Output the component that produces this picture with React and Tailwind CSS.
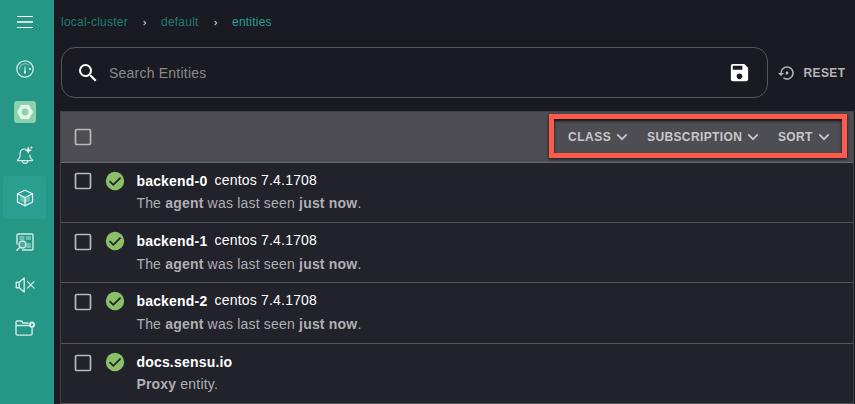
import React from "react";

const stroke = {
  fill: "none",
  stroke: "#d3ebe7",
  strokeWidth: 1.25,
  strokeLinejoin: "round",
  strokeLinecap: "round",
};

function NavItem({ children, active = false }) {
  return (
    <div
      className={
        active
          ? "flex h-[43px] w-[43px] items-center justify-center rounded-[3px] bg-[#2a9f91]"
          : "flex h-[43px] w-[43px] items-center justify-center"
      }
    >
      {children}
    </div>
  );
}

function Sidebar() {
  return (
    <nav className="flex h-full w-[54px] shrink-0 flex-col items-center bg-[#259786] pr-[5px]">
      <div className="mt-[16px] ml-px flex h-[12px] w-4 flex-col justify-between">
        <i className="block h-px bg-white" />
        <i className="block h-[2px] bg-[#c5e6e1]" />
        <i className="block h-px bg-white" />
      </div>
      <div className="mt-[19px] flex flex-col">
        <NavItem>
          <svg width="20" height="20" viewBox="0 0 20 20" {...stroke}>
            <circle cx="10" cy="10" r="8.2" />
            <path d="M4.7 10a5.3 5.3 0 0 1 9-3.8" stroke="#79c2b7" />
            <path d="M10 8v3" strokeWidth="1.4" stroke="#a8d9d1" />
            <path d="M9 11.5h2v3H9zM14.2 9h1.6v1.9h-1.6z" fill="#f0faf8" stroke="none" />
          </svg>
        </NavItem>
        <NavItem>
          <svg width="22" height="22" viewBox="0 0 22 22">
            <rect width="22" height="22" rx="3" fill="#8bd2ac" />
            <path fillRule="evenodd" fill="#e4f4ec" d="M7 4h8l4 7-4 7H7l-4-7zM11 7.6a3.4 3.4 0 1 0 0 6.8 3.4 3.4 0 0 0 0-6.8z" />
          </svg>
        </NavItem>
        <NavItem>
          <svg width="20" height="20" viewBox="0 0 20 20" {...stroke}>
            <path d="M10.2 3.8C6.8 3.6 5 6 5 9v2.7c0 1.3-2.6 2.5-2.6 3.9h15.2c0-1.4-2.6-2.6-2.6-3.9v-1.5" />
            <path d="M7.2 15.8a2.8 2.5 0 0 0 5.6 0" />
            <path d="M13.3 2.2l.8 2.2 2.2.8-2.2.8-.8 2.200-.8-2.200-2.200-.8 2.200-.8z" fill="#fff" stroke="#fff" strokeWidth=".6" />
            <path d="M16.400 1.700v1.800M15.500 2.600h1.800" strokeWidth=".8" />
          </svg>
        </NavItem>
        <NavItem active>
          <svg width="20" height="20" viewBox="0 0 20 20" {...stroke} stroke="#eef8f6">
            <path d="M5 7.600l5 2.300 5-2.300v5.200l-5 2.500-5-2.500z" fill="#68bfb3" stroke="none" />
            <path d="M10 2.200l7.500 3.600v8.300L10 17.800l-7.500-3.700V5.800z" />
            <path d="M2.500 5.800L10 9.500l7.500-3.700M10 9.500v8.300" />
          </svg>
        </NavItem>
        <NavItem>
          <svg className="mt-[2px]" width="20" height="20" viewBox="0 0 20 20" {...stroke}>
            <path d="M4.500 4h5v4h-5zM11 4h5v4h-5zM11.500 11h4.500v5h-4.500z" fill="#70bdb2" stroke="none" />
            <path d="M2 12V3.200c0-.8.400-1.200 1.200-1.200h13.600c.8 0 1.200.4 1.200 1.200v13.600c0 .8-.4 1.200-1.200 1.200H7.500" strokeWidth="1.400" />
            <circle cx="7.500" cy="12.500" r="3.500" fill="#4dab9e" strokeWidth="1.400" />
            <path d="M5 15.200L2 18.200" strokeWidth="1.600" />
          </svg>
        </NavItem>
        <NavItem>
          <svg className="mt-[2px]" width="20" height="20" viewBox="0 0 20 20" {...stroke}>
            <path d="M1.200 7.300h3v5.400h-3zM4.200 7.300L9.200 3v14l-5-4.300" strokeWidth="1.400" />
            <path d="M12.500 6.600l6.500 6.500M19 6.600l-6.500 6.500" />
          </svg>
        </NavItem>
        <NavItem>
          <svg className="mt-[2px]" width="20" height="20" viewBox="0 0 20 20" {...stroke} strokeWidth="1.400">
            <path d="M13 5H8L6.700 3H2.200C1.400 3 1 3.400 1 4.200v11.600c0 .8.600 1.300 1.400 1.300h13.200c.9 0 1.500-.5 1.500-1.300v-5.300M1 7.500h12.500" />
            <circle cx="17" cy="6.700" r="2" strokeWidth="1.500" stroke="#f4fbfa" />
            <circle cx="17" cy="6.700" r="2.900" strokeWidth=".7" strokeDasharray="1.100 1.180" stroke="#f4fbfa" />
          </svg>
        </NavItem>
      </div>
    </nav>
  );
}

function Separator() {
  return (
    <svg className="mt-px shrink-0" width="4" height="6" viewBox="0 0 4 6" fill="none" stroke="#b5b5b8" strokeWidth="1.200">
      <path d="M.6.900L2.700 3 .6 5.100" />
    </svg>
  );
}

function Checkbox({ className }) {
  return (
    <svg className={className} width="18" height="18" viewBox="0 0 18 18" fill="none">
      <rect x="1.500" y="1.500" width="15" height="15" rx="1.200" stroke="#b9b9bc" strokeWidth="1.700" />
    </svg>
  );
}

function Filter({ label, labelClass }) {
  return (
    <div className="flex items-center">
      <span className={labelClass}>{label}</span>
      <svg width="12" height="8" viewBox="0 0 12 8" fill="none" stroke="#c8c8cb" strokeWidth="1.700">
        <path d="M1.200 1.400L6 6.200l4.800-4.800" />
      </svg>
    </div>
  );
}

const rows = [
  { name: "backend-0", os: "centos 7.4.1708", height: "h-[60px]", box: "mt-[9px]", check: "mt-[6.5px]", gap: "mt-[2px]" },
  { name: "backend-1", os: "centos 7.4.1708", height: "h-[60px]", box: "mt-[10px]", check: "mt-[7px]", gap: "mt-[3px]" },
  { name: "backend-2", os: "centos 7.4.1708", height: "h-[61px]", box: "mt-[10px]", check: "mt-[7px]", gap: "mt-[3px]" },
  { name: "docs.sensu.io", height: "h-[60px]", box: "mt-[9.5px]", check: "mt-[6.5px]", gap: "mt-[2px]" },
];

function EntityRow({ row }) {
  return (
    <div className={"flex shrink-0 items-start border-b border-[#55555a] pl-[13px] " + row.height}>
      <Checkbox className={"shrink-0 " + row.box} />
      <svg className={"ml-[12px] shrink-0 " + row.check} width="22" height="22" viewBox="0 0 24 24">
        <circle cx="12" cy="12" r="10" fill="#8bc068" />
        <path d="M6.100 12.200l4 4 8-8" fill="none" stroke="#22222b" strokeWidth="1.900" />
      </svg>
      <div className="ml-[10.4px] pt-[8px] whitespace-nowrap">
        <div className="flex h-5 items-center text-[14px] leading-5 text-white">
          <span className="font-bold tracking-[0.2px]">{row.name}</span>
          {row.os && <span className="relative -top-px ml-[7px] tracking-[0.2px]">{row.os}</span>}
        </div>
        <div className={"text-[14px] leading-5 tracking-[0.195px] text-[#b0b0b3] " + row.gap}>
          {row.os ? (
            <>
              The <b>agent</b> was last seen <b>just now</b>.
            </>
          ) : (
            <>
              <b>Proxy</b> entity.
            </>
          )}
        </div>
      </div>
    </div>
  );
}

export default function App() {
  return (
    <div className="flex h-[404px] w-[855px] overflow-hidden bg-[#1a1a22] font-['Liberation_Sans',Arial,sans-serif]">
      <Sidebar />
      <main className="flex min-w-0 flex-1 flex-col pl-[6px]">
        <div className="flex h-[47px] items-center pb-[3px] pl-px text-[12px] tracking-[0.22px] text-[#1c7c70]">
          <span className="w-[82px]">local-cluster</span>
          <Separator />
          <span className="ml-[14px] w-[53px]">default</span>
          <Separator />
          <span className="ml-[14px] text-[#27a08f]">entities</span>
        </div>
        <div className="flex h-[51px] items-center">
          <div className="ml-px flex h-[51px] w-[707px] items-center rounded-[14px] border border-[#55555a] pr-[16px] pl-[14px]">
            <svg width="24" height="24" viewBox="0 0 24 24" fill="#fff">
              <path d="M15.500 14h-.79l-.28-.27A6.471 6.471 0 0 0 16 9.500 6.500 6.500 0 1 0 9.500 16c1.610 0 3.090-.59 4.230-1.570l.27.28v.79l5 4.990L20.490 19l-4.990-5zm-6 0C7.010 14 5 11.990 5 9.500S7.010 5 9.500 5 14 7.010 14 9.500 11.990 14 9.500 14z" />
            </svg>
            <span className="mt-[2px] ml-[9px] flex-1 text-[14px] tracking-[0.22px] text-[#8a8a8e]">Search Entities</span>
            <svg width="23" height="23" viewBox="0 0 24 24" fill="#fff">
              <path d="M17 3H5a2 2 0 0 0-2 2v14a2 2 0 0 0 2 2h14c1.100 0 2-.9 2-2V7l-4-4zm-5 16c-1.660 0-3-1.340-3-3s1.340-3 3-3 3 1.340 3 3-1.340 3-3 3zm3-10H5V5h10v4z" />
            </svg>
          </div>
          <svg className="ml-[10px]" width="18" height="18" viewBox="0 0 24 24" fill="#b5b5b8">
            <path d="M14 12c0-1.100-.9-2-2-2s-2 .9-2 2 .9 2 2 2 2-.9 2-2zm-2-9a9 9 0 0 0-9 9H0l4 4 4-4H5c0-3.870 3.130-7 7-7s7 3.130 7 7a6.995 6.995 0 0 1-11.060 5.700l-1.420 1.440A9 9 0 1 0 12 3z" />
          </svg>
          <span className="ml-[7.500px] text-[12px] font-bold tracking-[0.4px] text-[#b5b5b8]">RESET</span>
        </div>
        <section className="mt-[13px] flex h-[293px] w-[794px] flex-col border border-b-0 border-[#424248] bg-[#22222b]">
          <header className="flex h-[51px] shrink-0 items-center border-b border-[#68686d] bg-[#4e4d53] pl-[13px]">
            <Checkbox className="shrink-0" />
            <div className="mr-[6px] mb-[3px] ml-auto flex h-[44px] w-[298px] items-center border-[5px] border-[#ff5a4b] pt-[2px] pl-[14px] text-[12px] font-bold text-[#c8c8cb] shadow-[0_1px_3px_rgba(0,0,0,0.8),inset_0_2px_3px_rgba(0,0,0,0.8)]">
              <Filter label="CLASS" labelClass="w-[48px] tracking-[0.5px]" />
              <div className="w-[19px]" />
              <Filter label="SUBSCRIPTION" labelClass="w-[100px] tracking-[0.38px]" />
              <div className="w-[19px]" />
              <Filter label="SORT" labelClass="w-[40px] tracking-[0.35px]" />
            </div>
          </header>
          {rows.map((row) => (
            <EntityRow key={row.name} row={row} />
          ))}
        </section>
      </main>
    </div>
  );
}
